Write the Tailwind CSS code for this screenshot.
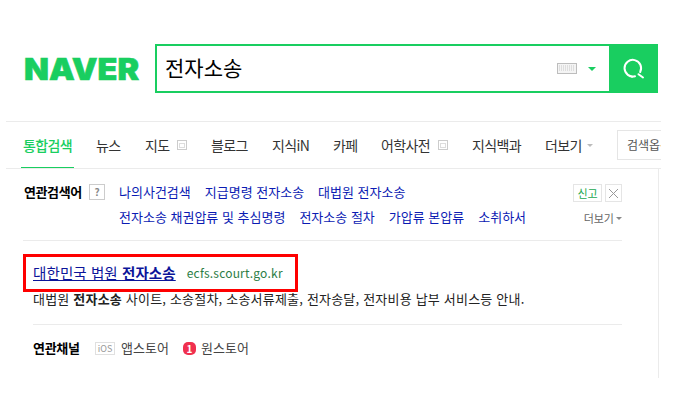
<!DOCTYPE html>
<html lang="ko">
<head>
<meta charset="utf-8">
<title>전자소송 : 네이버 통합검색</title>
<script src="https://cdn.jsdelivr.net/npm/@tailwindcss/browser@4"></script>
</head>
<body class="bg-white overflow-hidden font-['Noto_Sans_CJK_KR','Noto_Sans',sans-serif] text-[13px] text-[#222]">
<div class="w-[676px] h-[420px] overflow-hidden">

  <!-- header -->
  <header class="h-[121px] pt-[44px] flex items-start">
    <a class="w-[155px] pl-[24px] h-[49px] flex items-center font-['Inter',sans-serif] font-black text-[30px] leading-none text-[#19ce60]">
      <span class="inline-block origin-left scale-x-[1.08] [-webkit-text-stroke:0.6px_#19ce60]">NAVER</span>
    </a>
    <div class="flex w-[503px] h-[49px]">
      <div class="flex-1 border-[2px] border-r-0 border-[#19ce60] flex items-center pl-[8px] pr-[13px]">
        <span class="flex-1 text-[21px] leading-none text-black -mt-[2px]">전자소송</span>
        <svg class="w-[20px] h-[11px]" viewBox="0 0 20 11">
          <rect x="0.5" y="0.5" width="19" height="10" fill="#f4f4f4" stroke="#bdbdbd"/>
          <path d="M2 3h16M2 5h16M2 7h16" stroke="#c8c8c8" stroke-dasharray="1 1"/>
        </svg>
        <span class="ml-[11px] w-0 h-0 border-x-[4px] border-x-transparent border-t-[4px] border-t-[#19ce60]"></span>
      </div>
      <button class="w-[49px] bg-[#19ce60] flex items-center justify-center">
        <svg class="w-[24px] h-[24px]" viewBox="0 0 24 24" fill="none" stroke="white" stroke-width="2" stroke-linecap="round">
          <path d="M13 19.2A8.3 8.3 0 1 1 18.2 15"/>
          <path d="M16.5 17.2L21 20.5"/>
          <circle cx="10" cy="19.8" r="0.6" fill="white" stroke-width="1"/>
        </svg>
      </button>
    </div>
  </header>

  <!-- tabs -->
  <nav class="ml-[6px] w-[655px] h-[48px] border-y border-[#ebebeb] flex items-center pl-[17px] text-[14px] tracking-[-0.6px] text-[#333] overflow-hidden relative whitespace-nowrap">
    <a class="shrink-0 w-[73px] text-[#19ce60] font-medium">통합검색</a>
    <a class="shrink-0 w-[49px]">뉴스</a>
    <a class="shrink-0 w-[32px]">지도</a>
    <span class="shrink-0 w-[10px] h-[10px] border border-[#ccc] mr-[24px] flex items-center justify-center"><span class="w-[6px] h-[5px] border border-[#ddd]"></span></span>
    <a class="shrink-0 w-[61px]">블로그</a>
    <a class="shrink-0 w-[61px]">지식iN</a>
    <a class="shrink-0 w-[48px]">카페</a>
    <a class="shrink-0 w-[57px]">어학사전</a>
    <span class="shrink-0 w-[10px] h-[10px] border border-[#ccc] mr-[24px] flex items-center justify-center"><span class="w-[6px] h-[5px] border border-[#ddd]"></span></span>
    <a class="shrink-0 w-[73px]">지식백과</a>
    <a class="shrink-0 w-[42px]">더보기</a>
    <span class="shrink-0 w-0 h-0 border-x-[3px] border-x-transparent border-t-[3px] border-t-[#bbb] mr-[24px]"></span>
    <a class="shrink-0 w-[60px] h-[30px] border border-[#e5e5e5] pl-[9px] flex items-center text-[12px] tracking-normal text-[#555]">검색옵션</a>
    <span class="absolute left-[15px] bottom-[-1px] w-[53px] h-[2px] bg-[#19ce60]"></span>
  </nav>

  <!-- content -->
  <main class="ml-[6px] w-[653px] h-[209px] border-r border-[#ebebeb]">

    <!-- related searches -->
    <section class="ml-[17px] w-[599px] h-[72px] border-b border-[#ebebeb] flex">
      <div class="w-[96px] pl-px pt-[14px] flex items-start">
        <b class="text-[13px] leading-[18px] tracking-[-0.4px] text-black font-bold w-[65px]">연관검색어</b>
        <span class="mt-px w-[16px] h-[16px] border border-[#ccc] text-[10px] leading-[14px] font-bold text-center text-[#888]">?</span>
      </div>
      <div class="flex-1 pt-[13px] text-[#0b1bb3] whitespace-nowrap">
        <div class="h-[25px] leading-[20px] flex gap-[14px]"><a>나의사건검색</a><a>지급명령 전자소송</a><a>대법원 전자소송</a></div>
        <div class="h-[25px] leading-[20px] flex gap-[14px]"><a>전자소송 채권압류 및 추심명령</a><a>전자소송 절차</a><a>가압류 본압류</a><a>소취하서</a></div>
      </div>
      <div class="w-[49px] pt-[15px] flex flex-col items-end">
        <div class="flex gap-[3px]">
          <span class="w-[29px] h-[18px] border border-[#e5e5e5] text-[11px] leading-[16px] text-center text-[#19a84f]">신고</span>
          <span class="w-[17px] h-[18px] border border-[#e5e5e5] flex items-center justify-center">
            <svg class="w-[9px] h-[9px]" viewBox="0 0 9 9" stroke="#999"><path d="M0 0L9 9M9 0L0 9"/></svg>
          </span>
        </div>
        <div class="mt-[7px] flex items-center gap-[2px] text-[11px] leading-[18px] text-[#666] whitespace-nowrap">
          더보기<span class="w-0 h-0 border-x-[3px] border-x-transparent border-t-[3px] border-t-[#888]"></span>
        </div>
      </div>
    </section>

    <!-- result -->
    <section class="ml-[17px] mt-[13px] w-[275px] h-[38px] border-[3px] border-[#fe0000] pl-[7px] flex items-center whitespace-nowrap">
      <a class="underline text-[#0b1499] text-[14.5px] tracking-[0.1px]">대한민국 법원 <b>전자소송</b></a>
      <span class="ml-[11px] text-[12px] tracking-[0.2px] text-[#2d7d46]">ecfs.scourt.go.kr</span>
    </section>
    <p class="ml-[27px] w-[589px] h-[33px] leading-[13px] text-[13px] tracking-[0.2px] text-[#222] border-b border-[#ebebeb] whitespace-nowrap">대법원 <b>전자소송</b> 사이트, 소송절차, 소송서류제출, 전자송달, 전자비용 납부 서비스등 안내.</p>

    <!-- channels -->
    <section class="ml-[27px] mt-[12px] flex items-center h-[22px] whitespace-nowrap">
      <b class="w-[62px] text-[13px] tracking-[-0.3px] text-black">연관채널</b>
      <span class="w-[20px] h-[13px] border border-[#e0e0e0] text-[9px] leading-[11px] text-center text-[#999]">iOS</span>
      <span class="ml-[6px] w-[62px] text-[#444]">앱스토어</span>
      <span class="w-[13px] h-[13px] rounded-[5px] bg-[#f0304f] text-white text-[10px] leading-[13px] font-bold text-center">1</span>
      <span class="ml-[5px] text-[#444]">원스토어</span>
    </section>
  </main>
</div>
</body>
</html>
